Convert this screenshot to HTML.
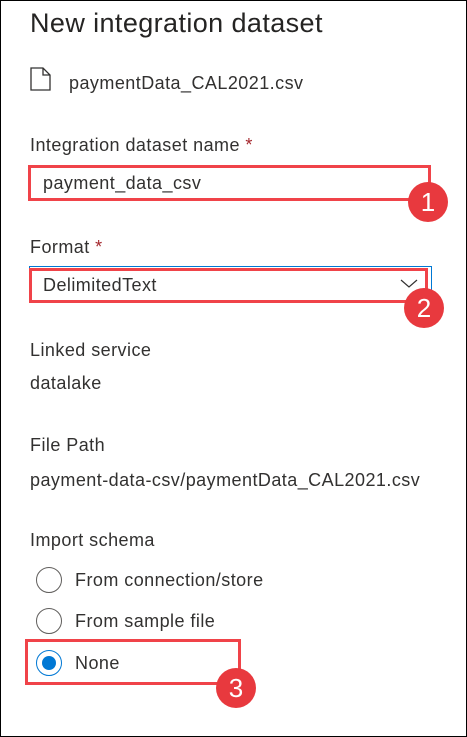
<!DOCTYPE html>
<html><head><style>
body{margin:0;width:467px;height:737px;position:relative;background:#fff;font-family:"Liberation Sans",sans-serif;color:#323130;overflow:hidden}
.frame{position:absolute;left:0;top:0;width:465px;height:735px;border:1px solid #000}
.t{position:absolute;white-space:nowrap;line-height:1}
.s{font-size:18px;letter-spacing:0.45px}
.box{position:absolute;border:3px solid #f04349;box-sizing:border-box}
.c{position:absolute;width:40px;height:40px;border-radius:50%;background:#e8393e;color:#fff;font-size:26px;text-align:center;line-height:40px}
.r{position:absolute;width:26px;height:26px;border-radius:50%;border:1px solid #605e5c;box-sizing:border-box}
</style></head><body>
<div class="frame"></div>
<div class="t" style="left:30px;top:10px;font-size:27px;letter-spacing:0.4px;color:#252423">New integration dataset</div>
<svg style="position:absolute;left:30px;top:67px" width="21" height="24"><path d="M1 1H13L20 8V23H1Z M13 1V8H20" fill="none" stroke="#323130" stroke-width="1.3"/></svg>
<div class="t s" style="left:69px;top:74px">paymentData_CAL2021.csv</div>
<div class="t s" style="left:30px;top:136px">Integration dataset name <span style="color:#a4262c">*</span></div>
<div class="box" style="left:28px;top:165px;width:403px;height:36px"></div>
<div class="t s" style="left:43px;top:174px">payment_data_csv</div>
<div class="c" style="left:408px;top:182px">1</div>
<div class="t s" style="left:30px;top:238px">Format <span style="color:#a4262c">*</span></div>
<div style="position:absolute;left:29px;top:266px;width:403px;height:37px;border:1px solid #0078d4;box-sizing:border-box"></div>
<div class="box" style="left:29px;top:268px;width:399px;height:35px"></div>
<div class="t s" style="left:43px;top:276px">DelimitedText</div>
<svg style="position:absolute;left:400px;top:279px" width="18" height="10"><path d="M1 1L9 8L17 1" fill="none" stroke="#323130" stroke-width="1.2"/></svg>
<div class="c" style="left:404px;top:288px">2</div>
<div class="t s" style="left:30px;top:341px">Linked service</div>
<div class="t s" style="left:30px;top:374px">datalake</div>
<div class="t s" style="left:30px;top:436px">File Path</div>
<div class="t s" style="left:30px;top:471px">payment-data-csv/paymentData_CAL2021.csv</div>
<div class="t s" style="left:30px;top:531px">Import schema</div>
<div class="r" style="left:36px;top:567px"></div>
<div class="t s" style="left:75px;top:571px">From connection/store</div>
<div class="r" style="left:36px;top:608px"></div>
<div class="t s" style="left:75px;top:612px">From sample file</div>
<div class="r" style="left:36px;top:650px;border-color:#0078d4"><div style="position:absolute;left:5px;top:5px;width:14px;height:14px;border-radius:50%;background:#0078d4"></div></div>
<div class="t s" style="left:75px;top:654px">None</div>
<div class="box" style="left:25px;top:639px;width:216px;height:46px"></div>
<div class="c" style="left:216px;top:668px">3</div>
</body></html>
